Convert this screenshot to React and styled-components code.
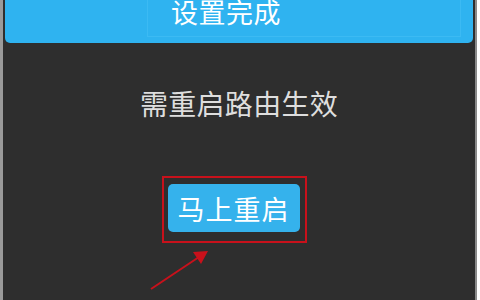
import styled, { createGlobalStyle } from 'styled-components'

const Global = createGlobalStyle`
  html, body { margin: 0; padding: 0; background: #ffffff; }
  body { font-family: "Noto Sans CJK SC", "Noto Sans", sans-serif; }
`

const Screen = styled.div`
  position: relative;
  width: 477px;
  height: 300px;
  overflow: hidden;
  background: #2e2e2e;
  border-left: 3px solid #9a9a9a;
  border-right: 2px solid #8a8a8a;
  box-sizing: border-box;
  display: flex;
  flex-direction: column;
  align-items: center;
`

const Header = styled.div`
  align-self: stretch;
  margin: 0 2px 0 2px;
  height: 43px;
  flex-shrink: 0;
  background: #2fb3f0;
  border-radius: 0 0 5px 5px;
  display: flex;
  justify-content: center;
  overflow: hidden;
`

const HeaderInner = styled.div`
  margin-left: 142px;
  margin-right: 12px;
  flex: 1;
  height: 36px;
  border: 1px solid #3cbaf3;
  border-top: none;
  display: flex;
  justify-content: flex-start;
`

const HeaderTitle = styled.div`
  margin-left: 23px;
  margin-top: -10px;
  color: #ffffff;
  font-size: 27px;
  line-height: 44px;
  letter-spacing: 0.5px;
`

const Notice = styled.div`
  margin-top: 42px;
  color: #dedede;
  font-size: 28px;
  line-height: 36px;
  letter-spacing: 0.3px;
`

const Highlight = styled.div`
  margin-top: 55px;
  margin-left: -10px;
  padding: 6px 5px 9px 4px;
  border: 2px solid #c8111b;
`

const RestartButton = styled.button`
  display: block;
  width: 132px;
  height: 48px;
  border: none;
  border-radius: 5px;
  background: #35b2ec;
  color: #ffffff;
  font-family: "Noto Sans CJK SC", "Noto Sans", sans-serif;
  font-size: 27px;
  letter-spacing: 1px;
  padding: 0;
`

const Arrow = styled.svg`
  position: absolute;
  left: 0;
  top: 0;
  pointer-events: none;
`

export default function App () {
  return (
    <>
      <Global />
      <Screen>
        <Header>
          <HeaderInner>
            <HeaderTitle>设置完成</HeaderTitle>
          </HeaderInner>
        </Header>
        <Notice>需重启路由生效</Notice>
        <Highlight>
          <RestartButton>马上重启</RestartButton>
        </Highlight>
        <Arrow width="477" height="300" viewBox="0 0 477 300">
          <line x1="148" y1="289" x2="196" y2="257" stroke="#c8111b" strokeWidth="2" />
          <polygon points="205,251 190,252 198,264" fill="#c8111b" />
        </Arrow>
      </Screen>
    </>
  )
}
